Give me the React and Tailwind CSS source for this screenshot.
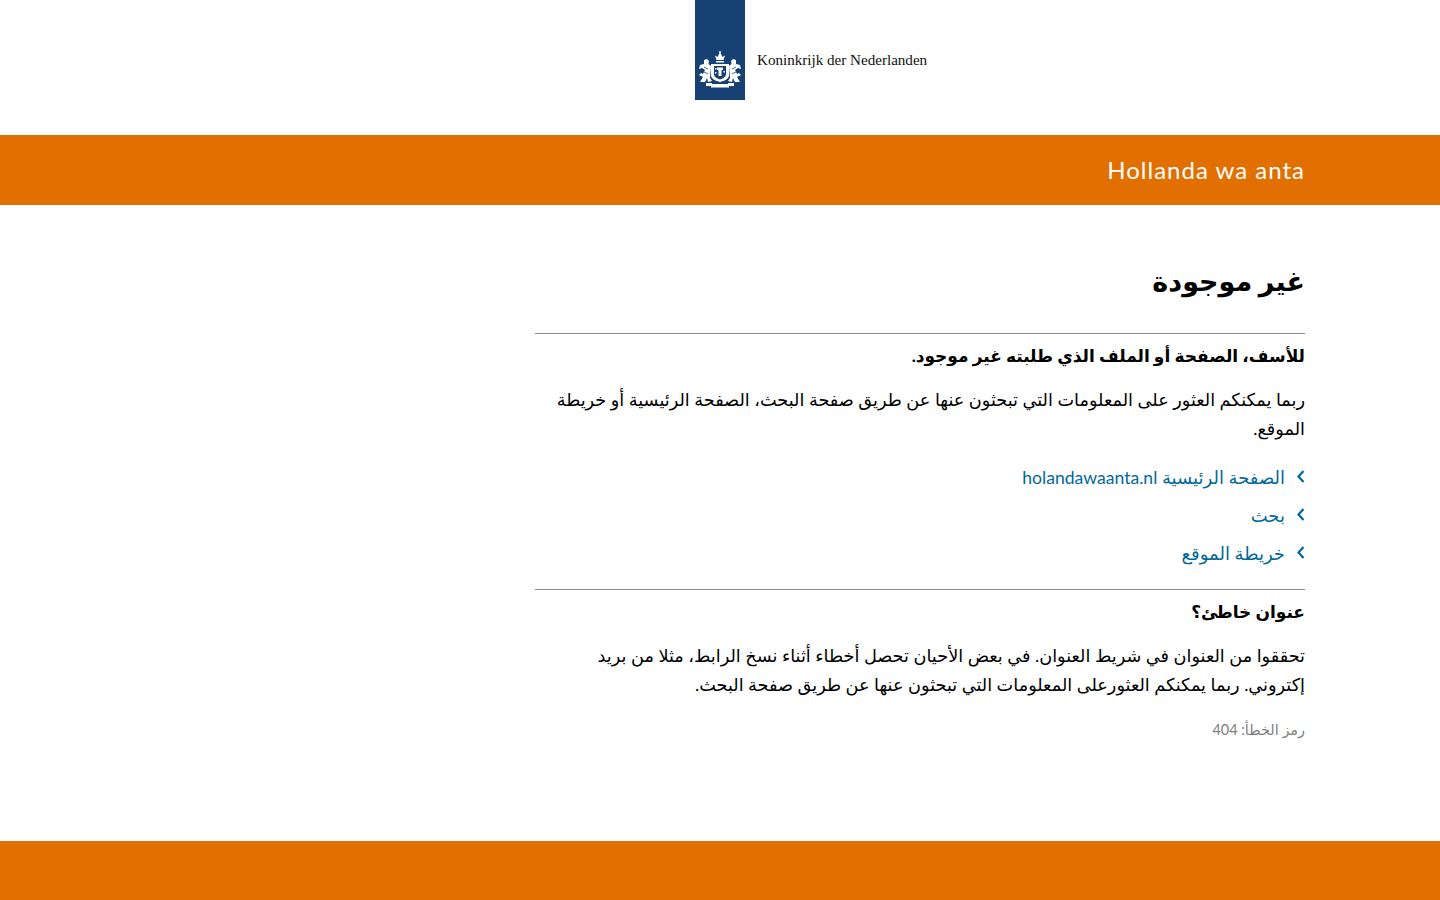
import React from "react";

const bodyFont = "font-['Lato','DejaVu_Sans',sans-serif]";

const links = [
  { label: <>الصفحة الرئيسية <span className="text-[17.6px]">holandawaanta.nl</span></> },
  { label: "بحث" },
  { label: "خريطة الموقع" },
];

function Crest() {
  return (
    <svg width="44" height="38" viewBox="0 0 44 38" fill="#fff">
      {/* crown */}
      <path d="M18.5 9 L17 4.5 L19.5 6 L22 1 L24.5 6 L27 4.5 L25.5 9 Z" />
      <rect x="21.3" y="0" width="1.4" height="2" />
      <rect x="18" y="10" width="8" height="1.5" />
      {/* mantle and shield */}
      <path d="M13 13 H31 V24 C31 28 26 30 22 31 C18 30 13 28 13 24 Z" />
      <path d="M16 15 H28 V23 C28 26 25 27.5 22 28.5 C19 27.5 16 26 16 23 Z" fill="#154273" />
      <path d="M19 16.5 H25 V19 H23.5 V25 H20.5 V19 H19 Z" />
      <path d="M17 17 h1.5 v1.5 h-1.5 Z M25.5 20 h1.5 v1.5 h-1.5 Z M17 21 h1.5 v1.5 h-1.5 Z" />
      {/* left lion */}
      <path d="M6 9 L9 8 L11 10 L10.5 13 L13 15 L12 27 L14 30 L10 31 L9 27 L7 31 L2 31 L5 26 L1 24 L3 22 L5 23 L7 19 L4 17 L1 18 L2 14 L6 13 Z" />
      {/* right lion */}
      <path d="M38 9 L35 8 L33 10 L33.5 13 L31 15 L32 27 L30 30 L34 31 L35 27 L37 31 L42 31 L39 26 L43 24 L41 22 L39 23 L37 19 L40 17 L43 18 L42 14 L38 13 Z" />
      <path d="M6 16 L10 18 M6 21 L10 23 M38 16 L34 18 M38 21 L34 23" stroke="#154273" strokeWidth="0.8" fill="none" />
      {/* ribbon */}
      <path d="M8 32 H14 V33 H30 V32 H36 V35 H31 V36.5 H13 V35 H8 Z" />
    </svg>
  );
}

function Chevron() {
  return (
    <svg width="8" height="13" viewBox="0 0 8 13" fill="none" className="shrink-0 mt-[7px]">
      <path d="M6.5 1 L1.5 6.5 L6.5 12" stroke="#01689b" strokeWidth="2.2" />
    </svg>
  );
}

export default function App() {
  return (
    <div className={`min-h-[900px] flex flex-col bg-white text-black ${bodyFont}`}>
      <header className="grid grid-cols-[1fr_50px_1fr] h-[135px]">
        <div></div>
        <div className="h-[100px] bg-[#154273] flex justify-center items-end pb-[11px]">
          <Crest />
        </div>
        <div className="h-[100px] flex items-center pl-3 pt-[20px]">
          <span className="font-['Liberation_Serif',serif] text-[15.1px] text-[#111]">
            Koninkrijk der Nederlanden
          </span>
        </div>
      </header>

      <div className="h-[70px] bg-[#e17000] flex justify-end items-center pr-[135px]">
        <span className="text-white text-[24px] tracking-[1px]">Hollanda wa anta</span>
      </div>

      <main dir="rtl" className="flex-1 mr-[135px] ml-auto w-[770px] pt-[50px]">
        <h1 className="text-[27px] leading-[52px] font-bold mb-[26px]">غير موجودة</h1>

        <div className="border-t border-[#8c8c8c] pt-[7px]">
          <h2 className="text-[17px] leading-[30px] font-bold mb-[14px]">
            للأسف، الصفحة أو الملف الذي طلبته غير موجود.
          </h2>
          <p className="text-[17.7px] leading-[29px] mb-[20px]">
            ربما يمكنكم العثور على المعلومات التي تبحثون عنها عن طريق صفحة البحث، الصفحة الرئيسية أو خريطة الموقع.
          </p>
          <ul className="flex flex-col gap-[9px] mb-[21px]">
            {links.map((link, index) => (
              <li key={index} className="flex gap-3 h-[29px] text-[18px] leading-[29px] text-[#01689b]">
                <Chevron />
                <a href="#">{link.label}</a>
              </li>
            ))}
          </ul>
        </div>

        <div className="border-t border-[#8c8c8c] pt-[7px]">
          <h2 className="text-[17px] leading-[30px] font-bold mb-[14px]">عنوان خاطئ؟</h2>
          <p className="text-[17.7px] leading-[29px] mb-[16px]">
            تحققوا من العنوان في شريط العنوان. في بعض الأحيان تحصل أخطاء أثناء نسخ الرابط، مثلا من بريد إكتروني. ربما يمكنكم العثورعلى المعلومات التي تبحثون عنها عن طريق صفحة البحث.
          </p>
          <p className="text-[14.4px] leading-[30px] text-[#808080]">رمز الخطأ: 404</p>
        </div>
      </main>

      <footer className="h-[59px] bg-[#e17000]"></footer>
    </div>
  );
}
